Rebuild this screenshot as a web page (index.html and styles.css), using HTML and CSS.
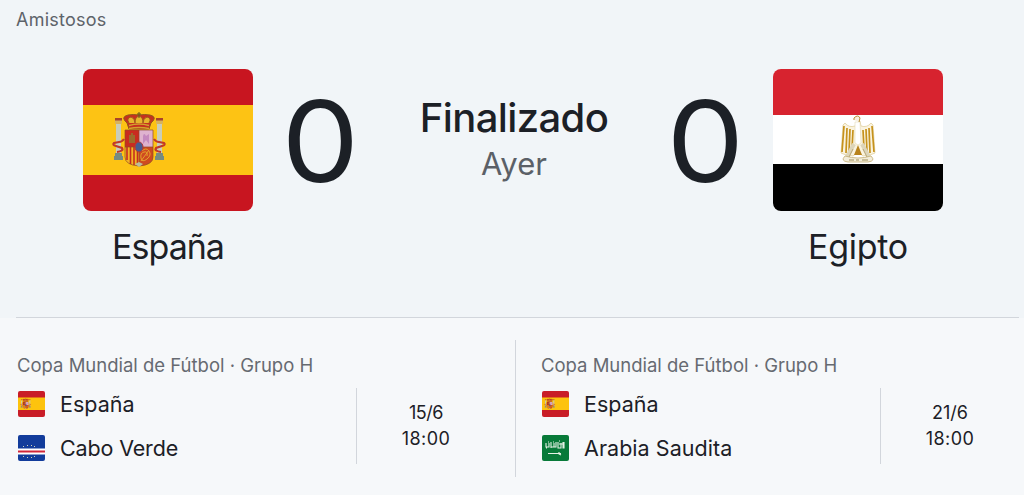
FILE: index.html
```html
<!DOCTYPE html>
<html lang="es">
<head>
<meta charset="utf-8">
<title>España - Egipto</title>
<link rel="stylesheet" href="styles.css">
</head>
<body>
<main class="card">
  <section class="hero">
    <div class="league">Amistosos</div>
    <div class="match">
      <div class="team">
        <svg class="flag" viewBox="0 0 170 142">
          <path fill="#c81520" d="M0 0h170v142H0z"/>
          <path fill="#fdc314" d="M0 36h170v70H0z"/>
          <g id="crest">
            <path fill="#c9cdb9" d="M33 54h5v33h-5zM74 54h5v33h-5z"/>
            <path fill="#d9b35a" d="M32 51h7v4h-7zM73 51h7v4h-7z"/>
            <path fill="#a8432b" d="M32 49h7v2.500h-7zM73 49h7v2.500h-7z"/>
            <path fill="#788b80" d="M32 84h7v3h-7zM73 84h7v3h-7zM31 87h9v4h-9zM72 87h9v4h-9z"/>
            <path d="M41 70q-2 3-5 3l-5 1q-2 2 2 3l6 2q2 3-5 4M71 70q2 3 5 3l5 1q2 2-2 3l-6 2q-2 3 5 4" fill="none" stroke="#c0392b" stroke-width="2.200"/>
            <path fill="#c92b20" d="M42 61h14v17H42z"/>
            <path fill="#dfb3cf" d="M56 61h14v17H56z"/>
            <path fill="#f2b524" d="M42 78h14v19q-14-1-14-9z"/>
            <path fill="#cf4a20" d="M70 78H56v19q14-1 14-9z"/>
            <path d="M44 78v13M47.500 78v17M51 78v18M54.500 78v19" stroke="#c62d20" stroke-width="1.600"/>
            <path d="M59 82q4-4 7 0t-2 8-6-1 3-6 3 4M58 92l8-11" fill="none" stroke="#e5a02b"/>
            <path d="M46 66h2v-2h2v2h2v8h-6z" fill="#9b6a2d"/>
            <path d="M60 75v-8q1-4 3 0l3-2v10l-3-4z" fill="#c58abf"/>
            <path d="M42 61h28v27q0 8-14 9-14-1-14-9zM56 61v36M42 78h28" fill="none" stroke="#8c4a25" stroke-width=".7"/>
            <ellipse cx="56" cy="78" rx="4" ry="5" fill="#485c91" stroke="#b43b38" stroke-width="1"/>
            <path fill="#b8bc9e" d="m52 95 4-2 4 2-4 3z"/>
            <path d="M44 54q-7-6 1-8 5-1 11 0 6-1 11 0 8 2 1 8l-2 6H46z" fill="#c7301f" stroke="#8f5a1b"/>
            <path d="M46 54q-3-5 2-6 4 1 4 6 0-6 4-7 4 1 4 7 0-5 4-6 5 1 2 6" fill="#e7b42c" stroke="#a15a1b"/>
            <path d="M46 56.500q10-3 20 0M46 59.500q10-2 20 0" fill="none" stroke="#d3a12d" stroke-width="1.400"/>
            <path d="M56 43v6M54 45h4" stroke="#63571c"/>
          </g>
        </svg>
        <div class="team-name">España</div>
      </div>
      <div class="score"><span class="digit">0</span></div>
      <div class="status">
        <div class="state">Finalizado</div>
        <div class="day">Ayer</div>
      </div>
      <div class="score score-away"><span class="digit">0</span></div>
      <div class="team">
        <svg class="flag" viewBox="0 0 170 142">
          <path fill="#fff" d="M0 0h170v142H0z"/>
          <path fill="#d7232f" d="M0 0h170v46H0z"/>
          <path d="M0 95h170v47H0z"/>
          <path d="M82 57q-6 2-10-3l-2 2q-1 15-2 28l5 2 7 1 5-4 5 4 7-1 5-2q-1-14-2-28l-2-2q-4 5-10 3l-1-5z" fill="#faf3df" stroke="#d7c285" stroke-width=".6"/>
          <path d="m71 57-2 26M74 59l-1 25M77 60l-1 23M80 61l-1 19M99 57l2 26M96 59l1 25M93 60l1 23M90 61l1 19" fill="none" stroke="#c6921c" stroke-width="1.700"/>
          <path d="M82 53h5l1 21-3 2-3-2z" fill="#fff" stroke="#dfd0a6" stroke-width=".5"/>
          <path d="m85 76-4 10h8z" fill="#b8831d"/>
          <path d="m81 75-7 13M89 75l7 13" stroke="#ddd5ba" stroke-width="4"/>
          <path d="m80 80-4 8M90 80l4 8" stroke="#b9a878"/>
          <path d="M72 87q-5 5 3 6h20q8-1 3-6-13 4-26 0z" fill="#f3edda" stroke="#c2ac71" stroke-width=".8"/>
          <path d="M76 91h5m2 0h3m3 0h6" stroke="#a08f57"/>
          <path d="M81 51v-2q4-4 6 0l-1 4" fill="#f7f0e0" stroke="#b98d35"/>
        </svg>
        <div class="team-name egypt">Egipto</div>
      </div>
    </div>
  </section>
  <section class="fixtures">
    <article class="fixture">
      <div class="info">
        <div class="cup">Copa Mundial de Fútbol · Grupo H</div>
        <div class="row">
          <svg class="mini" viewBox="0 0 27 26"><path fill="#c91d27" d="M0 0h27v26H0z"/><path fill="#fdc30d" d="M0 6.500h27v12.500H0z"/><use href="#crest" transform="translate(-3.500 -.7) scale(.2 .19)"/></svg>
          <span>España</span>
        </div>
        <div class="row">
          <svg class="mini" viewBox="0 0 27 26"><path fill="#123c9b" d="M0 0h27v26H0z"/><path fill="#fff" d="M0 13.500h27v6H0z"/><path fill="#d12639" d="M0 15.500h27v2H0z"/><path d="M5 11.500h1m3-1h1m3 0h1m2 1h1M5 21.500h1m3 1h1m3 0h1m2-1h1" stroke="#d2d3b7"/></svg>
          <span class="cabo">Cabo Verde</span>
        </div>
      </div>
      <div class="date"><span class="d1">15/6</span><span class="hour">18:00</span></div>
    </article>
    <article class="fixture second">
      <div class="info">
        <div class="cup">Copa Mundial de Fútbol · Grupo H</div>
        <div class="row">
          <svg class="mini" viewBox="0 0 27 26"><path fill="#c91d27" d="M0 0h27v26H0z"/><path fill="#fdc30d" d="M0 6.500h27v12.500H0z"/><use href="#crest" transform="translate(-3.500 -.7) scale(.2 .19)"/></svg>
          <span>España</span>
        </div>
        <div class="row">
          <svg class="mini" viewBox="0 0 27 26"><path fill="#087a39" d="M0 0h27v26H0z"/><path d="M4 8v4h3V8m-2 5H4m5-6v6m0-1h3V8m2-1v5h-2m4-5v6h3V8m-2 1h4m0-2v6h1V7M6 7h1m4 0h1m5-1h1" fill="none" stroke="#e5f1e5" stroke-width="1.100"/><path d="M6 18.500h13m-2-1.500v2l2 1" fill="none" stroke="#e5f1e5" stroke-width="1.200"/></svg>
          <span class="arabia">Arabia Saudita</span>
        </div>
      </div>
      <div class="date"><span class="d2">21/6</span><span class="hour">18:00</span></div>
    </article>
  </section>
</main>
</body>
</html>
```
FILE: styles.css
```css
* { box-sizing: border-box; }
body {
  margin: 0;
  background: #f6f8fa;
  color: #1c2026;
  font-family: Inter, "Open Sans", sans-serif;
}
.card { height: 495px; overflow: hidden; }
.hero { height: 318px; background: #f1f5f8; position: relative; }
.hero::after {
  content: "";
  position: absolute;
  left: 16px;
  right: 5px;
  bottom: 0;
  height: 1px;
  background: #d2d6dc;
}
.league {
  height: 69px;
  padding: 10px 0 0 16px;
  color: #5e636a;
  font-size: 18px;
  line-height: 20px;
  letter-spacing: 0.25px;
}
.match {
  display: grid;
  grid-template-columns: 170px 134px 254px 132px 170px;
  padding-left: 83px;
}
.team { text-align: center; white-space: nowrap; }
.flag { display: block; width: 170px; height: 142px; border-radius: 8px; }
.team-name {
  margin-top: 16px;
  font-size: 34px;
  line-height: 40px;
  letter-spacing: -1px;
}
.egypt { letter-spacing: -0.25px; }
.score {
  padding-top: 12px;
  text-align: center;
  font-size: 112px;
  line-height: 120px;
}
.digit { display: inline-block; transform: scaleX(1.1); }
.score-away { padding-right: 4px; }
.status { padding-top: 28px; text-align: center; white-space: nowrap; }
.state { font-size: 40px; font-weight: 500; line-height: 42px; letter-spacing: -0.6px; }
.day { margin-top: 5px; color: #5b6067; font-size: 31px; line-height: 40px; letter-spacing: 0.1px; }
.fixtures { display: flex; padding: 22px 0 18px; height: 177px; }
.fixture { display: flex; flex: 0 0 516px; border-right: 1px solid #d2d6dc; }
.second { flex-basis: 508px; border-right: 0; }
.info { width: 356px; padding: 15px 0 0 18px; white-space: nowrap; }
.second .info { width: 364px; padding-left: 26px; }
.cup { height: 36px; margin-left: -1px; color: #666a71; font-size: 18.500px; line-height: 20px; letter-spacing: -0.01px; }
.row { display: flex; align-items: center; gap: 15px; height: 26px; margin-bottom: 18px; font-size: 21.500px; line-height: 26px; }
.cabo { letter-spacing: -0.15px; }
.arabia { letter-spacing: 0.05px; }
.mini { width: 27px; height: 26px; border-radius: 2px; }
.date {
  display: flex;
  flex-direction: column;
  align-items: center;
  width: 139px;
  height: 76px;
  margin-top: 48px;
  padding-top: 12px;
  border-left: 1px solid #d2d6dc;
  font-size: 18px;
  line-height: 26px;
}
.d1 { letter-spacing: -0.5px; }
.hour { letter-spacing: 0.4px; }
```
